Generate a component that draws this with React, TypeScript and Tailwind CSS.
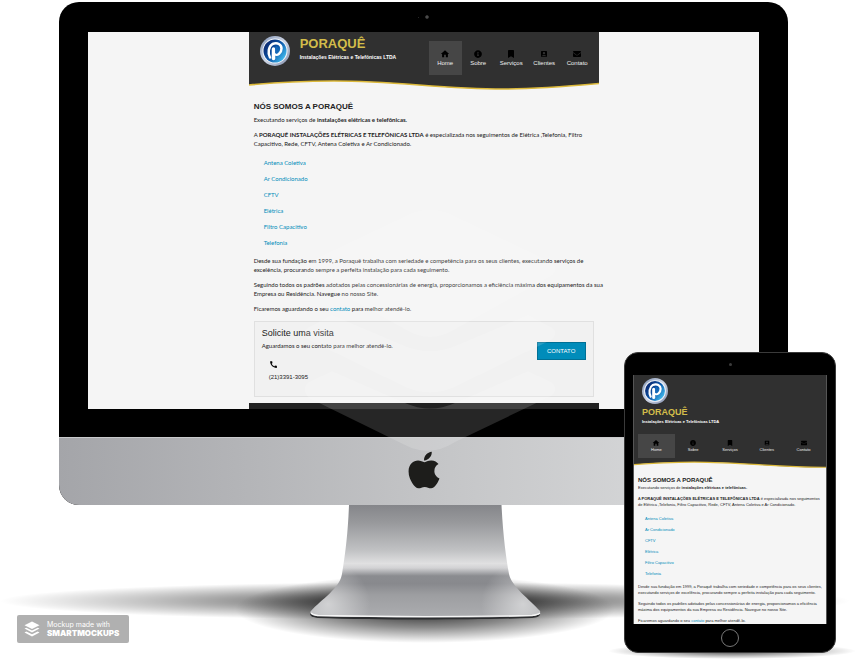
import type { ReactNode } from "react";
import { FaApple, FaBookmark, FaEnvelope, FaInfoCircle } from "react-icons/fa";
import { MdAccountBox, MdCall, MdHome } from "react-icons/md";

const services = ["Antena Coletiva", "Ar Condicionado", "CFTV", "Elétrica", "Filtro Capacitivo", "Telefonia"];

const menu = [
  { label: "Home", Icon: MdHome },
  { label: "Sobre", Icon: FaInfoCircle },
  { label: "Serviços", Icon: FaBookmark },
  { label: "Clientes", Icon: MdAccountBox },
  { label: "Contato", Icon: FaEnvelope },
];

function Logo({ className, id }: { className: string; id: string }) {
  return (
    <svg viewBox="0 0 60 60" className={className} role="img" aria-label="Poraquê">
      <defs>
        <linearGradient id={id + "ring"} x1="0" y1="0" x2="1" y2="1">
          <stop offset="0" stopColor="#8093b5" />
          <stop offset="0.5" stopColor="#cfd6e4" />
          <stop offset="1" stopColor="#7f8cab" />
        </linearGradient>
        <linearGradient id={id + "disc"} x1="0.1" y1="0.2" x2="0.9" y2="0.8">
          <stop offset="0" stopColor="#0b2a72" />
          <stop offset="0.5" stopColor="#0c56a8" />
          <stop offset="1" stopColor="#3fb6ea" />
        </linearGradient>
      </defs>
      <circle cx="30" cy="30" r="30" fill={`url(#${id}ring)`} />
      <circle cx="30" cy="30" r="25" fill="#f4f7fb" />
      <circle cx="30" cy="30" r="23" fill={`url(#${id}disc)`} />
      <path d="M20 43c-5-9-3-22 5-27 10-4 18 1 18 9 0 9-8 15-14 11" fill="none" stroke="#fff" strokeWidth="5" strokeLinecap="round" />
      <path d="M27 26v19" stroke="#fff" strokeWidth="7" strokeLinecap="round" />
      <path d="M33 23v10" stroke="#1769b8" strokeWidth="5" strokeLinecap="round" />
    </svg>
  );
}

function Wave({ d, className }: { d: string; className: string }) {
  return (
    <svg viewBox="0 0 350 11" preserveAspectRatio="none" className={className} aria-hidden="true">
      <path d={`M0 0H350V${d}Z`} fill="#303030" />
      <path d={`M350 ${d}`} fill="none" stroke="#dcb93a" strokeWidth="1.600" />
    </svg>
  );
}

type Sizes = {
  nav: string;
  item: string;
  icon: string;
  homeIcon: string;
  article: string;
  prose: string;
  heading: string;
  list: string;
  row: string;
};

const desktop: Sizes = {
  nav: "grid w-[165px] grid-cols-5",
  item: "h-[34px] text-[6px] leading-[8px]",
  icon: "size-[10px] p-px",
  homeIcon: "size-[10px]",
  article: "gap-[6px] px-[5px] pt-[10px] font-[Lato,sans-serif] text-[6px] leading-[9px]",
  prose: "-mr-3",
  heading: "mb-[2px] text-[8px] leading-[12px]",
  list: "pl-[10px]",
  row: "h-4",
};

const tablet: Sizes = {
  nav: "mx-1 mt-2 grid grid-cols-5",
  item: "h-6 text-[4px] leading-[6px]",
  icon: "size-[8px] p-px",
  homeIcon: "size-[8px]",
  article: "gap-[5px] px-1 pt-[7px] text-[4px] leading-[6px]",
  prose: "",
  heading: "mb-px text-[6px] leading-[8px]",
  list: "pl-[7px]",
  row: "h-[11px]",
};

function Menu({ s }: { s: Sizes }) {
  return (
    <nav className={s.nav}>
      {menu.map(({ label, Icon }, i) => (
        <a
          key={label}
          href="#"
          className={`flex flex-col items-center justify-center text-[#eeeeee] ${s.item} ${i === 0 ? "bg-[#464646]" : ""}`}
        >
          <Icon className={`text-black ${i === 0 ? s.homeIcon : s.icon}`} />
          {label}
        </a>
      ))}
    </nav>
  );
}

function Article({ s, children }: { s: Sizes; children?: ReactNode }) {
  return (
    <main className={`flex flex-col text-[#222222] ${s.article}`}>
      <div>
        <h1 className={`font-['Liberation_Sans',Arial,sans-serif] font-bold text-[#222222] ${s.heading}`}>NÓS SOMOS A PORAQUÊ</h1>
        <p>
          Executando serviços de <b>instalações elétricas e telefônicas.</b>
        </p>
      </div>
      <p className={s.prose}>
        A <b>PORAQUÊ INSTALAÇÕES ELÉTRICAS E TELEFÔNICAS LTDA</b> é especializada nos seguimentos de Elétrica ,Telefonia, Filtro
        Capacitivo, Rede, CFTV, Antena Coletiva e Ar Condicionado.
      </p>
      <ul className={s.list}>
        {services.map((name) => (
          <li key={name} className={`flex items-center ${s.row}`}>
            <a href="#" className="text-[#008cba]">{name}</a>
          </li>
        ))}
      </ul>
      <p className={s.prose}>
        Desde sua fundação em 1999, a Poraquê trabalha com seriedade e competência para os seus clientes, executando serviços de
        excelência, procurando sempre a perfeita instalação para cada seguimento.
      </p>
      <p className={s.prose}>
        Seguindo todos os padrões adotados pelas concessionárias de energia, proporcionamos a eficiência máxima dos equipamentos da
        sua Empresa ou Residência. Navegue no nosso Site.
      </p>
      <p>
        Ficaremos aguardando o seu <a href="#" className="text-[#008cba]">contato</a> para melhor atendê-lo.
      </p>
      {children}
    </main>
  );
}

function DesktopSite() {
  return (
    <div className="mx-auto w-[350px] max-w-full">
      <header className="bg-[#f5f5f5]">
        <div className="flex h-12 items-start bg-[#303030] pl-[11px] pr-[5px]">
          <Logo id="d" className="mt-1 size-[30px]" />
          <div className="ml-[10px] mt-[5px] flex-1 whitespace-nowrap">
            <p className="text-[13px] leading-[14px] font-bold text-[#d3bd4a]">PORAQUÊ</p>
            <p className="mt-[2px] text-[5px] leading-[8px] font-bold text-white">Instalações Elétricas e Telefônicas LTDA</p>
          </div>
          <div className="mt-[9px]">
            <Menu s={desktop} />
          </div>
        </div>
        <Wave className="block h-[11px] w-full" d="3.5C300 8 275 9 255 9C190 9 150 1 85 1C50 1 20 3 0 5" />
      </header>
      <Article s={desktop}>
        <section className="mt-[2px] flex h-[76px] items-start justify-between border border-[#e0e0e0] bg-[#f1f1f1] px-[7px] pt-[5px]">
          <div>
            <h2 className="font-['Liberation_Sans',Arial,sans-serif] text-[9px] leading-[12px] text-[#222222]">Solicite uma visita</h2>
            <p className="mt-[2px]">Aguardamos o seu contato para melhor atendê-lo.</p>
            <div className="ml-[7px] mt-[10px]">
              <MdCall className="size-[9px] text-black" />
              <p className="mt-1 font-['Liberation_Sans',Arial,sans-serif]">(21)3391-3095</p>
            </div>
          </div>
          <button className="mt-[15px] h-[18px] w-[49px] border border-[#007095] bg-[#008cba] font-['Liberation_Sans',Arial,sans-serif] text-[6px] leading-[8px] text-white">
            CONTATO
          </button>
        </section>
      </Article>
      <footer className="mt-[6px] h-[7px] bg-[#222222]" />
    </div>
  );
}

function TabletSite() {
  return (
    <>
      <header>
        <div className="bg-[#303030] pb-[3px]">
          <div className="pl-2 pt-[3px] whitespace-nowrap">
            <Logo id="t" className="size-[26px]" />
            <p className="mt-[3px] text-[9px] leading-[11px] font-bold text-[#d3bd4a]">PORAQUÊ</p>
            <p className="mt-px text-[4px] leading-[6px] font-bold text-white">Instalações Elétricas e Telefônicas LTDA</p>
          </div>
          <div className="pt-px">
            <Menu s={tablet} />
          </div>
        </div>
        <Wave className="block h-[8px] w-full" d="8.6C260 9 200 1.5 110 1.5C60 1.5 30 3 0 5" />
      </header>
      <Article s={tablet} />
    </>
  );
}

function Stand() {
  return (
    <svg viewBox="0 505 858 156" className="block w-full" aria-hidden="true">
      <defs>
        <radialGradient id="floor">
          <stop offset="0" stopColor="#000" stopOpacity="0.75" />
          <stop offset="0.3" stopColor="#000" stopOpacity="0.5" />
          <stop offset="0.65" stopColor="#000" stopOpacity="0.24" />
          <stop offset="1" stopColor="#000" stopOpacity="0" />
        </radialGradient>
        <radialGradient id="under">
          <stop offset="0" stopColor="#000" stopOpacity="0.9" />
          <stop offset="0.55" stopColor="#000" stopOpacity="0.45" />
          <stop offset="1" stopColor="#000" stopOpacity="0" />
        </radialGradient>
        <linearGradient id="metal" x1="0" y1="0" x2="0" y2="1">
          <stop offset="0" stopColor="#85868a" />
          <stop offset="0.15" stopColor="#97989b" />
          <stop offset="0.4" stopColor="#c0c1c3" />
          <stop offset="0.52" stopColor="#e0e0e1" />
          <stop offset="0.56" stopColor="#d2d2d4" />
          <stop offset="0.63" stopColor="#8b8c90" />
          <stop offset="0.7" stopColor="#88898d" />
          <stop offset="0.8" stopColor="#9d9ea1" />
          <stop offset="1" stopColor="#acadb0" />
        </linearGradient>
        <radialGradient id="glowLeft" gradientUnits="userSpaceOnUse" cx="328" cy="604" r="42">
          <stop offset="0" stopColor="#fff" stopOpacity="0.5" />
          <stop offset="1" stopColor="#fff" stopOpacity="0" />
        </radialGradient>
        <radialGradient id="glowRight" gradientUnits="userSpaceOnUse" cx="523" cy="604" r="42">
          <stop offset="0" stopColor="#fff" stopOpacity="0.5" />
          <stop offset="1" stopColor="#fff" stopOpacity="0" />
        </radialGradient>
        <path
          id="foot"
          d="M349 505H501.500C503 535 506 558 509 574C511 586 530 600 540 611C541 614 539 615 534 616C470 618 380 618 316 616C311 615 309 613 311 611C321 600 340 588 342 574C346 550 348 530 349 505Z"
        />
      </defs>
      <ellipse cx="425" cy="601" rx="425" ry="19" fill="url(#floor)" />
      <ellipse cx="425" cy="609" rx="190" ry="34" fill="url(#under)" />
      <ellipse cx="732" cy="651" rx="124" ry="8" fill="url(#floor)" />
      <path d="M310 613c0 4 3 4 8 5 60 2 150 2 214 0 5-1 9-1 8-6z" fill="#2d2e30" />
      <use href="#foot" fill="url(#metal)" />
      <use href="#foot" fill="url(#glowLeft)" />
      <use href="#foot" fill="url(#glowRight)" />
      <path d="M311 613C313 615 316 615 318 615.500C390 617 460 617 532 615.500C536 615 539 614 540 613" fill="none" stroke="#f5f5f5" strokeWidth="1.400" />
    </svg>
  );
}

function LayersMark() {
  return (
    <svg viewBox="0 0 858 661" className="pointer-events-none absolute left-0 top-0 w-full" aria-hidden="true">
      <g fill="#fff" fillOpacity="0.15">
        <path d="M412 213Q430 206 448 213L551 262Q560 269 551 276L452 331Q430 343 408 331L309 276Q300 269 309 262Z" />
        <path d="M309 327L332 315L405 346Q430 356 455 346L528 315L551 327Q560 333 551 340L455 387Q430 398 405 387L309 340Q300 333 309 327Z" />
        <path d="M309 382L332 371L405 403Q430 414 455 403L528 371L551 382Q560 389 551 396L455 442Q430 458 405 445L309 398Q300 389 309 382Z" />
      </g>
    </svg>
  );
}

export default function App() {
  return (
    <div className="relative w-full overflow-hidden bg-white pt-[2px] font-['Liberation_Sans',Arial,sans-serif]">
      <div className="ml-[59px] w-[85%] overflow-hidden rounded-[20px] bg-black">
        <div className="flex h-[30px] items-center justify-center gap-[6px]">
          <span className="size-px rounded-full bg-[#333333]" />
          <span className="size-[4px] rounded-full border border-[#333333] bg-[#555555]" />
        </div>
        <div className="mx-[29px] h-[377px] overflow-hidden bg-[#f5f5f5]">
          <DesktopSite />
        </div>
        <div className="mt-7 flex h-[68px] items-center justify-center border-t border-[#c9cacc] bg-linear-to-r from-[#a4a5a9] via-[#c3c4c6] to-[#dfe0e1] pb-1">
          <FaApple className="h-[42px] w-[32px] text-[#1d1d1b]" />
        </div>
      </div>
      <Stand />
      <LayersMark />

      <div className="absolute right-[22px] top-[352px] w-[212px] rounded-[14px] border border-[#3a3a3a] bg-black px-2">
        <div className="flex h-[22px] items-center justify-center">
          <span className="size-[3px] rounded-full bg-[#3c3c3c]" />
        </div>
        <div className="h-[249px] overflow-hidden border-x border-[#555555] bg-[#f5f5f5]">
          <TabletSite />
        </div>
        <div className="flex h-[28px] items-center justify-center pb-px">
          <button aria-label="Início" className="size-[18px] rounded-full border border-[#777777]" />
        </div>
      </div>

      <div className="absolute left-[17px] top-[615px] flex h-[28px] w-[112px] items-center gap-[7px] rounded-[2px] bg-[#b0b0b0] pl-[7px] text-white">
        <svg viewBox="0 0 16 16" className="size-4" fill="#fff" aria-hidden="true">
          <path d="M8 0.500L15.500 4.200L8 7.900L0.500 4.200Z" />
          <path d="M0.500 7.600L2.300 6.700L8 9.500L13.700 6.700L15.500 7.600L8 11.600Z" />
          <path d="M0.500 11.400L2.300 10.500L8 13.300L13.700 10.500L15.500 11.400L8 15.500Z" />
        </svg>
        <div className="font-[Inter,sans-serif] whitespace-nowrap">
          <p className="text-[7px] leading-[8px]">Mockup made with</p>
          <p className="text-[8px] leading-[8px] font-black">SMARTMOCKUPS</p>
        </div>
      </div>
    </div>
  );
}
